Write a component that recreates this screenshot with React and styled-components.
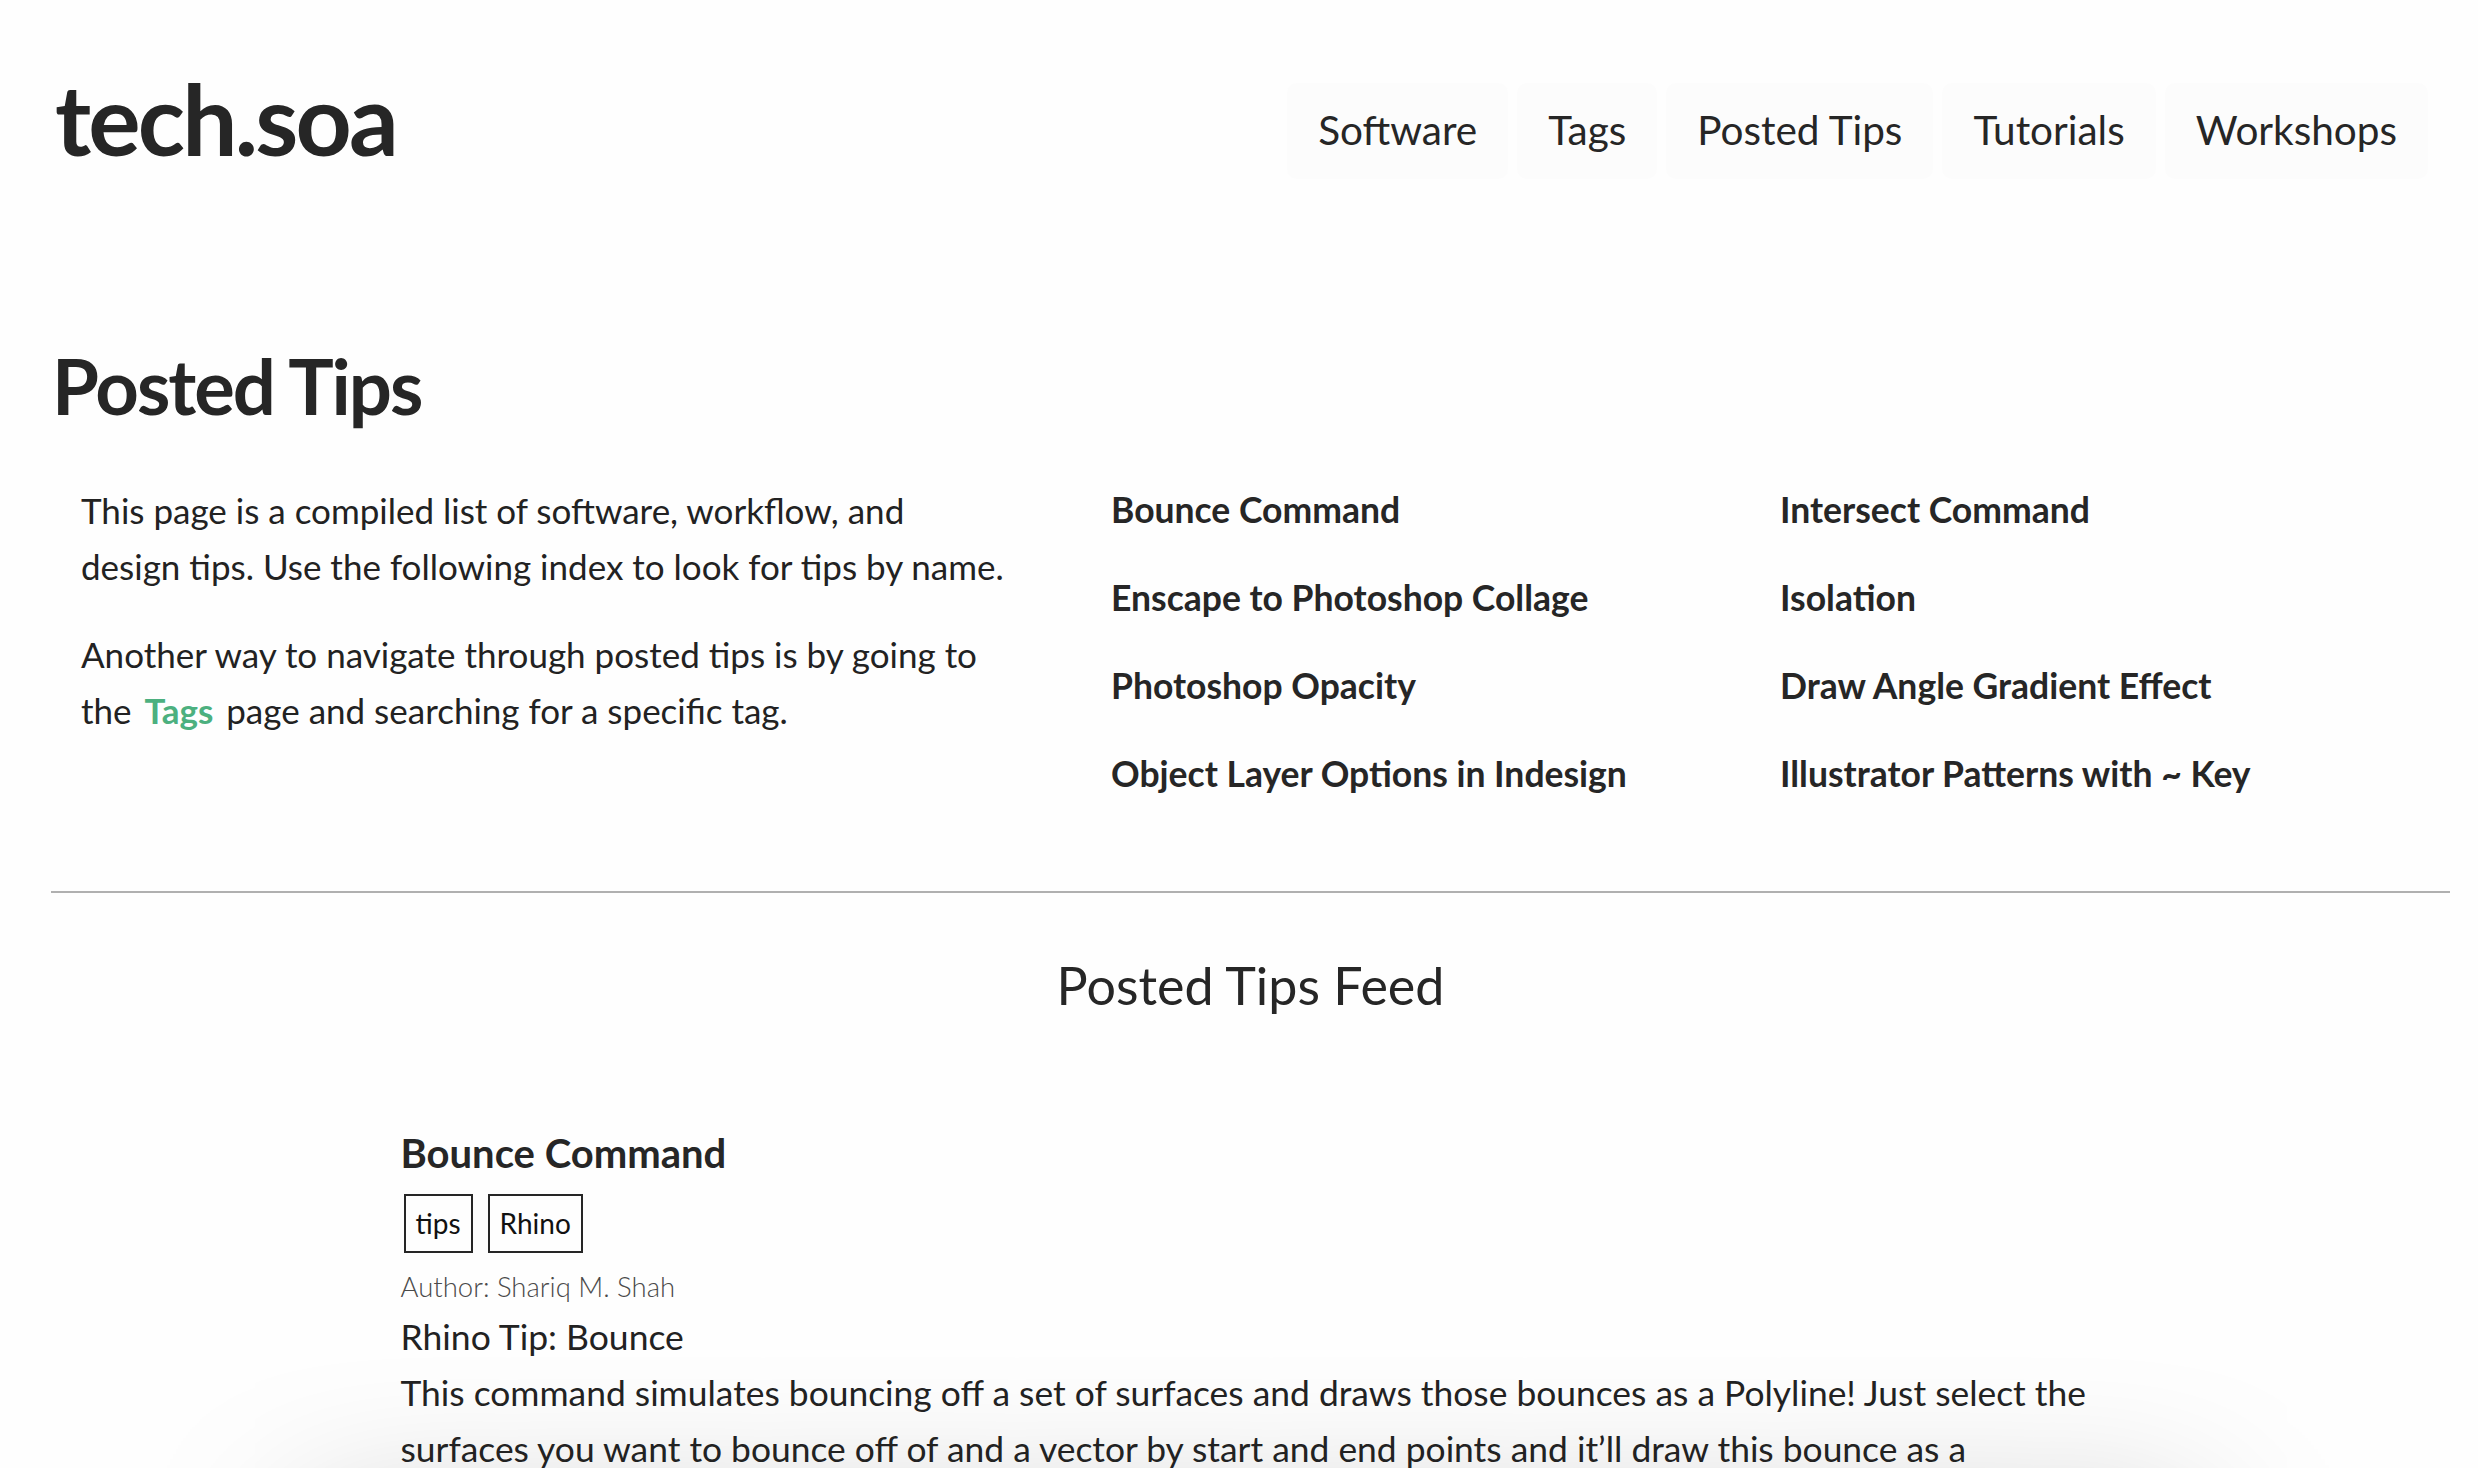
import React from "react";
import styled, { createGlobalStyle } from "styled-components";

const GlobalStyle = createGlobalStyle`
  html, body {
    margin: 0;
    padding: 0;
    background: #fefefe;
    overflow: hidden;
  }
  body {
    font-family: Lato, "Noto Sans", sans-serif;
    color: #222222;
  }
  * { box-sizing: border-box; }
`;

const Page = styled.div`
  width: 2478px;
  height: 1468px;
  overflow: hidden;
`;

const Header = styled.header`
  display: flex;
  justify-content: space-between;
  align-items: flex-start;
  padding: 69px 50px 0 55px;
`;

const Logo = styled.div`
  font-family: Lato, sans-serif;
  font-weight: 700;
  font-size: 98px;
  line-height: 1;
  letter-spacing: -2.8px;
  color: #262626;
`;

const Nav = styled.nav`
  display: flex;
  gap: 9px;
  margin-top: 14px;
`;

const NavItem = styled.a`
  display: block;
  padding: 27px 31px 28px;
  font-size: 40.5px;
  line-height: 1;
  color: #262626;
  text-decoration: none;
  background: #fcfcfc;
  border-radius: 10px;
`;

const Main = styled.main`
  padding: 0 28px 0 51px;
`;

const Title = styled.h1`
  margin: 169px 0 0 1px;
  font-size: 76px;
  font-weight: 700;
  line-height: 1;
  letter-spacing: -2px;
  color: #262626;
`;

const IntroGrid = styled.section`
  display: grid;
  grid-template-columns: 1030px 669px 1fr;
  margin-top: 58px;
`;

const Intro = styled.div`
  padding: 0 74px 0 30px;
`;

const Para = styled.p`
  margin: 0 0 32px;
  font-size: 35px;
  line-height: 56px;
  color: #222;
  &:last-child { margin-bottom: 0; }
`;

const GreenLink = styled.a`
  color: #4cb07f;
  font-weight: 700;
  text-decoration: none;
  margin: 0 4px;
`;

const IndexList = styled.ul`
  list-style: none;
  margin: 0;
  padding: 0 0 0 30px;
  display: flex;
  flex-direction: column;
  gap: 32px;
`;

const IndexItem = styled.li`
  font-size: 35.5px;
  line-height: 56px;
  font-weight: 700;
  color: #262626;
  white-space: nowrap;
`;

const Rule = styled.hr`
  margin: 89px 0 0 0;
  border: none;
  height: 2px;
  background: #b0b0b0;
`;

const FeedHeading = styled.h2`
  margin: 66px 0 0;
  text-align: center;
  font-size: 52px;
  font-weight: 400;
  line-height: 1;
  color: #262626;
`;

const Feed = styled.section`
  width: 1700px;
  margin: 0 auto;
  padding-right: 4px;
`;

const Post = styled.article`
  margin-top: 122px;
`;

const PostTitle = styled.h3`
  margin: 0;
  font-size: 40px;
  font-weight: 700;
  line-height: 1;
  color: #262626;
`;

const TagRow = styled.div`
  display: flex;
  gap: 15px;
  margin: 21px 0 0 3px;
`;

const Tag = styled.span`
  display: block;
  border: 2px solid #262626;
  padding: 8px 10px;
  font-size: 28px;
  line-height: 39px;
  color: #111;
`;

const Author = styled.div`
  margin-top: 20px;
  font-size: 27.5px;
  font-weight: 300;
  line-height: 1;
  color: #4a4a4a;
`;

const Subtitle = styled.div`
  margin-top: 19px;
  font-size: 35.5px;
  line-height: 1;
  color: #222;
`;

const Body = styled.p`
  margin: 10px 0 0;
  font-size: 35.4px;
  line-height: 56px;
  color: #222;
`;

const NextCard = styled.div`
  width: 1900px;
  height: 400px;
  margin: 20px 0 0 -100px;
  background: #fefefe;
  box-shadow: 0 -20px 160px rgba(0, 0, 0, 0.35);
`;

const navItems = ["Software", "Tags", "Posted Tips", "Tutorials", "Workshops"];
const col1 = [
  "Bounce Command",
  "Enscape to Photoshop Collage",
  "Photoshop Opacity",
  "Object Layer Options in Indesign",
];
const col2 = [
  "Intersect Command",
  "Isolation",
  "Draw Angle Gradient Effect",
  "Illustrator Patterns with ~ Key",
];

export default function App() {
  return (
    <Page>
      <GlobalStyle />
      <Header>
        <Logo>tech.soa</Logo>
        <Nav>
          {navItems.map((n) => (
            <NavItem key={n} href="#">{n}</NavItem>
          ))}
        </Nav>
      </Header>
      <Main>
        <Title>Posted Tips</Title>
        <IntroGrid>
          <Intro>
            <Para>
              This page is a compiled list of software, workflow, and design tips. Use the following index to look for tips by name.
            </Para>
            <Para>
              Another way to navigate through posted tips is by going to the <GreenLink href="#">Tags</GreenLink> page and searching for a specific tag.
            </Para>
          </Intro>
          <IndexList>
            {col1.map((t) => (
              <IndexItem key={t}>{t}</IndexItem>
            ))}
          </IndexList>
          <IndexList>
            {col2.map((t) => (
              <IndexItem key={t}>{t}</IndexItem>
            ))}
          </IndexList>
        </IntroGrid>
        <Rule />
        <FeedHeading>Posted Tips Feed</FeedHeading>
        <Feed>
          <Post>
            <PostTitle>Bounce Command</PostTitle>
            <TagRow>
              <Tag>tips</Tag>
              <Tag>Rhino</Tag>
            </TagRow>
            <Author>Author: Shariq M. Shah</Author>
            <Subtitle>Rhino Tip: Bounce</Subtitle>
            <Body>
              This command simulates bouncing off a set of surfaces and draws those bounces as a Polyline! Just select the surfaces you want to bounce off of and a vector by start and end points and it’ll draw this bounce as a polyline.
            </Body>
          </Post>
          <NextCard />
        </Feed>
      </Main>
    </Page>
  );
}
